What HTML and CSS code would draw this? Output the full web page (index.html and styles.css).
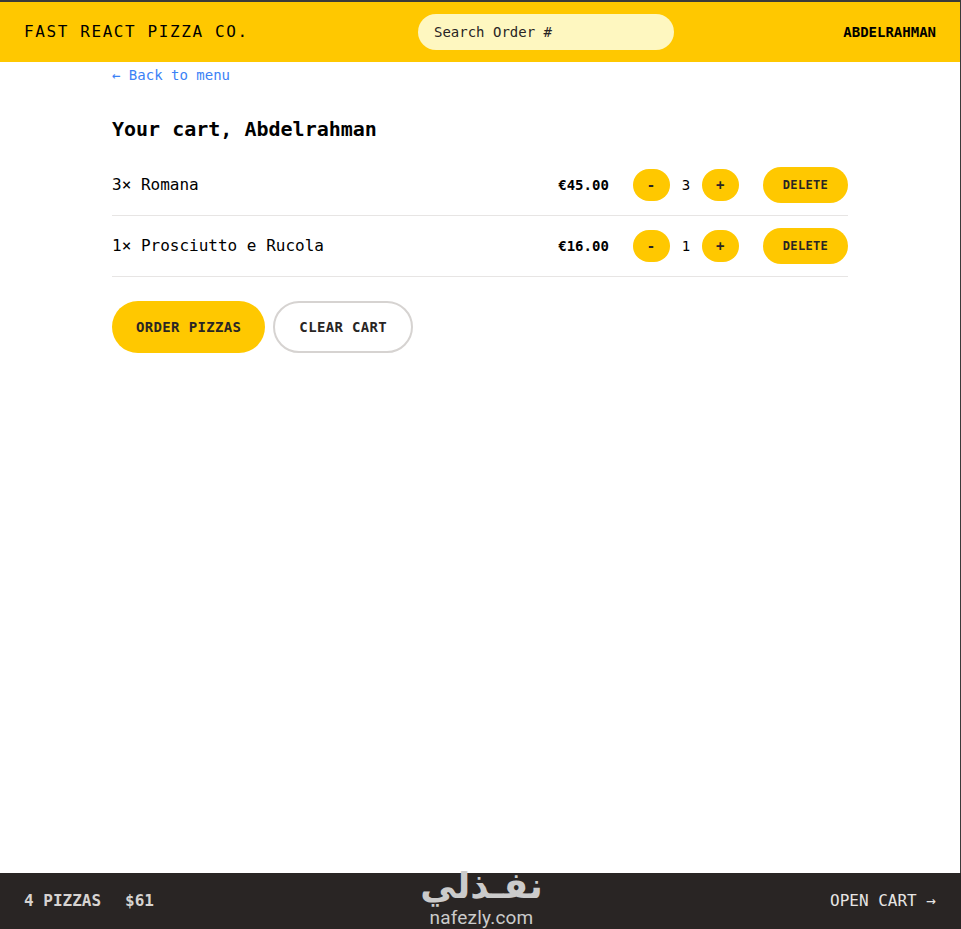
FILE: index.html
```html
<!DOCTYPE html>
<html lang="en">
<head>
    <meta charset="UTF-8">
    <meta name="viewport" content="width=device-width, initial-scale=1.0">
    <title>Fast React Pizza Co.</title>
    <link rel="stylesheet" href="styles.css">
</head>
<body>
    <div class="app">
        <header class="header">
            <a class="logo" href="#">Fast React Pizza Co.</a>
            <input class="search" type="text" placeholder="Search Order #">
            <div class="username">Abdelrahman</div>
        </header>

        <main class="main">
            <a class="back-link" href="#">&larr; Back to menu</a>
            <h2 class="cart-title">Your cart, Abdelrahman</h2>

            <ul class="cart-list">
                <li class="cart-item">
                    <p class="item-name">3&times; Romana</p>
                    <div class="item-controls">
                        <p class="item-price">€45.00</p>
                        <div class="quantity">
                            <button class="btn btn-round">-</button>
                            <span class="quantity-value">3</span>
                            <button class="btn btn-round">+</button>
                        </div>
                        <button class="btn btn-small">Delete</button>
                    </div>
                </li>
                <li class="cart-item">
                    <p class="item-name">1&times; Prosciutto e Rucola</p>
                    <div class="item-controls">
                        <p class="item-price">€16.00</p>
                        <div class="quantity">
                            <button class="btn btn-round">-</button>
                            <span class="quantity-value">1</span>
                            <button class="btn btn-round">+</button>
                        </div>
                        <button class="btn btn-small">Delete</button>
                    </div>
                </li>
            </ul>

            <div class="cart-actions">
                <a class="btn btn-primary" href="#">Order pizzas</a>
                <button class="btn btn-secondary">Clear cart</button>
            </div>
        </main>

        <footer class="cart-overview">
            <p class="overview-stats">
                <span>4 pizzas</span>
                <span>$61</span>
            </p>
            <a class="overview-link" href="#">Open cart &rarr;</a>
        </footer>

        <div class="watermark">
            <span class="watermark-ar" lang="ar" dir="rtl">نفـذلي</span>
            <span class="watermark-en">nafezly.com</span>
        </div>
    </div>
</body>
</html>
```

FILE: styles.css
```css
* {
    box-sizing: border-box;
    margin: 0;
    padding: 0;
}

body {
    font-family: "DejaVu Sans Mono", monospace;
    font-size: 16px;
    line-height: 24px;
    color: #000;
    background-color: #fff;
}

a {
    text-decoration: none;
    color: inherit;
}

ul {
    list-style: none;
}

.app {
    position: relative;
    display: grid;
    grid-template-rows: auto 1fr auto;
    height: 100vh;
    border-top: 2px solid #3a3a3a;
    border-right: 1px solid #3a3a3a;
}

.header {
    display: flex;
    justify-content: space-between;
    align-items: center;
    height: 60px;
    padding: 0 24px;
    background-color: #ffc800;
}

.logo {
    text-transform: uppercase;
    letter-spacing: 1.6px;
    color: #000;
}

.search {
    width: 256px;
    height: 36px;
    padding: 0 16px;
    border: none;
    border-radius: 18px;
    font-family: inherit;
    font-size: 14px;
    color: #292524;
    background-color: #fef7c0;
}

.search::placeholder {
    color: #292524;
    opacity: 1;
}

.username {
    font-size: 14px;
    font-weight: 700;
    text-transform: uppercase;
}

.main {
    width: 768px;
    margin: 0 auto;
    padding: 3px 16px 0;
}

.back-link {
    display: block;
    font-size: 14px;
    line-height: 20px;
    color: #3b82f6;
}

.cart-title {
    margin-top: 30px;
    font-size: 20px;
    line-height: 28px;
    font-weight: 700;
}

.cart-list {
    margin-top: 12px;
}

.cart-item {
    display: flex;
    justify-content: space-between;
    align-items: center;
    padding: 12px 0;
    border-bottom: 1px solid #e7e5e4;
}

.item-controls {
    display: flex;
    align-items: center;
    gap: 24px;
}

.item-price {
    font-size: 14px;
    line-height: 20px;
    font-weight: 700;
}

.quantity {
    display: flex;
    align-items: center;
    gap: 12px;
}

.quantity-value {
    font-size: 14px;
    line-height: 20px;
}

.btn {
    display: inline-block;
    border: none;
    border-radius: 999px;
    font-family: inherit;
    font-size: 14px;
    line-height: 20px;
    font-weight: 700;
    letter-spacing: 0.35px;
    text-transform: uppercase;
    color: #292524;
    background-color: #ffc800;
    cursor: pointer;
}

.btn-round {
    padding: 6px 14px;
}

.btn-small {
    padding: 10px 20px;
    font-size: 12px;
    line-height: 16px;
    letter-spacing: 0.3px;
}

.cart-actions {
    display: flex;
    gap: 8px;
    margin-top: 24px;
}

.btn-primary {
    padding: 16px 24px;
}

.btn-secondary {
    padding: 14px 24px;
    border: 2px solid #d6d3d1;
    color: #292524;
    background-color: transparent;
}

.cart-overview {
    display: flex;
    justify-content: space-between;
    align-items: center;
    height: 56px;
    margin-right: -1px;
    padding: 0 25px 0 24px;
    text-transform: uppercase;
    color: #e7e5e4;
    background-color: #292524;
}

.overview-stats {
    display: flex;
    gap: 24px;
    font-weight: 700;
    color: #d6d3d1;
}

/* site watermark sitting over the footer */
.watermark {
    position: absolute;
    left: 415px;
    top: 862px;
    display: flex;
    flex-direction: column;
    align-items: center;
    width: 133px;
    color: #cbcbcb;
}

.watermark-ar {
    font-family: "DejaVu Sans", sans-serif;
    font-size: 36px;
    line-height: 44px;
    font-weight: 700;
    white-space: nowrap;
}

.watermark-en {
    font-family: "Roboto", sans-serif;
    font-size: 19px;
    line-height: 20px;
    letter-spacing: 0.2px;
}
```
